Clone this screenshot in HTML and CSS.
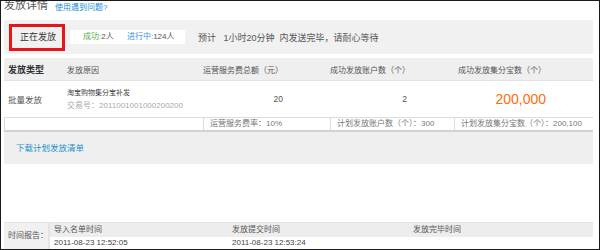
FILE: index.html
```html
<!DOCTYPE html>
<html>
  <head>
    <meta charset="utf-8" />
    <title>发放详情</title>
    <link rel="stylesheet" href="styles.css">
  </head>
  <body>
    <div class="frame">
      <div class="title-row">
        <h2 class="title">发放详情</h2>
        <a class="help" href="#">使用遇到问题?</a>
      </div>

      <div class="status">
        <div class="status-tag">正在发放</div>
        <div class="status-count">
          <span class="ok">成功:</span>2人
          <span class="run">进行中:</span>124人
        </div>
        <div class="status-eta">预计&nbsp;&nbsp; 1小时20分钟&nbsp; 内发送完毕，请耐心等待</div>
      </div>

      <div class="detail">
        <div class="grid head">
          <div class="cell type">发放类型</div>
          <div class="cell">发放原因</div>
          <div class="cell num">运营服务费总额（元）</div>
          <div class="cell num">成功发放账户数（个）</div>
          <div class="cell num">成功发放集分宝数（个）</div>
        </div>
        <div class="grid body">
          <div class="cell kind">批量发放</div>
          <div class="cell reason">
            <div class="reason-name">淘宝购物集分宝补发</div>
            <div class="trade">交易号：2011001001000200200</div>
          </div>
          <div class="cell num">20</div>
          <div class="cell num count">2</div>
          <div class="cell num big">200,000</div>
        </div>
        <div class="grid sum">
          <div class="cell span2"></div>
          <div class="cell">运营服务费率：10%</div>
          <div class="cell">计划发放账户数（个）：300</div>
          <div class="cell">计划发放集分宝数（个）：200,100</div>
        </div>
        <div class="download">
          <a href="#">下载计划发放清单</a>
        </div>
      </div>

      <div class="report">
        <div class="report-label">时间报告：</div>
        <div class="report-table">
          <div class="report-head">
            <div>导入名单时间</div>
            <div>发放提交时间</div>
            <div>发放完毕时间</div>
          </div>
          <div class="report-row">
            <div>2011-08-23 12:52:05</div>
            <div>2011-08-23 12:53:24</div>
            <div></div>
          </div>
        </div>
      </div>
    </div>
  </body>
</html>
```

FILE: styles.css
```css
html, body {
  margin: 0;
  padding: 0;
  background: #fff;
}
body {
  font-family: "Liberation Sans", "Noto Sans CJK SC", sans-serif;
  color: #444;
  font-size: 8px;
}
a {
  text-decoration: none;
}
.frame {
  width: 600px;
  height: 250px;
  box-sizing: border-box;
  border: 1px solid #1a1a1a;
  padding: 0 6px 0 3px;
  overflow: hidden;
}
.title-row {
  display: flex;
  align-items: flex-start;
  height: 19px;
}
.title {
  margin: -2px 0 0 0;
  font-size: 11px;
  line-height: 12px;
  font-weight: normal;
  color: #555;
}
.help {
  margin: 2px 0 0 7px;
  font-size: 8px;
  line-height: 10px;
  color: #1b8fd6;
}

/* status bar */
.status {
  display: flex;
  align-items: center;
  height: 34px;
  background: #f1f1f1;
}
.status-tag {
  margin-left: 5px;
  height: 21px;
  width: 42px;
  border: 3px solid #e8141a;
  font-size: 9px;
  line-height: 21px;
  padding-left: 8px;
  color: #333;
}
.status-count {
  margin-left: 5px;
  background: #fff;
  height: 14px;
  width: 102px;
  padding-left: 13px;
  line-height: 14px;
  font-size: 8px;
  color: #555;
}
.ok {
  color: #4faf3c;
}
.run {
  margin-left: 11px;
  color: #3b92e8;
}
.status-eta {
  margin-left: 13px;
  font-size: 9px;
  color: #555;
}

/* detail table */
.detail {
  margin-top: 4px;
  background: #efefef;
}
.grid {
  display: grid;
  grid-template-columns: 59px 140px 127px 124px 139px;
}
.cell {
  padding-left: 4px;
}
.cell.num {
  text-align: right;
  padding: 0 47px 0 0;
}
.head {
  height: 22px;
  align-items: center;
  border-bottom: 1px solid #e2e2e2;
  font-size: 8px;
  color: #555;
}
.head .type {
  font-weight: bold;
  font-size: 9px;
  color: #333;
}
.body {
  background: #fff;
  height: 36px;
  align-items: center;
  font-size: 8.5px;
  color: #555;
}
.kind {
  color: #555;
  font-size: 8.5px;
}
.reason {
  line-height: 13px;
  font-size: 8px;
}
.reason-name {
  font-size: 7px;
  color: #444;
}
.trade {
  color: #aaa;
}
.count {
  padding-bottom: 4px;
}
.big {
  font-size: 14px;
  color: #ff6d0b;
}
.sum {
  background: #fff;
  border-top: 1px solid #ddd;
  border-bottom: 2px solid #d2d2d2;
  height: 12px;
  line-height: 12px;
  font-size: 8px;
  color: #777;
}
.sum .cell {
  border-left: 1px solid #ddd;
  padding-left: 6px;
}
.sum .span2 {
  grid-column: span 2;
}
.download {
  height: 32px;
  line-height: 32px;
  padding-left: 12px;
}
.download a {
  font-size: 8.5px;
  color: #1d8fd2;
}

/* time report */
.report {
  display: flex;
  margin-top: 58px;
  height: 27px;
  border-top: 1px solid #e4e4e4;
}
.report-label {
  width: 46px;
  box-sizing: border-box;
  background: #f0f0f0;
  border-right: 2px solid #e4e4e4;
  font-size: 8px;
  line-height: 26px;
  padding-left: 4px;
  color: #555;
}
.report-table {
  flex: 1;
}
.report-head,
.report-row {
  display: grid;
  grid-template-columns: 178px 181px 1fr;
}
.report-head {
  height: 14px;
  line-height: 14px;
  background: #ededed;
  color: #555;
}
.report-row {
  height: 12px;
  line-height: 12px;
  color: #444;
}
.report-head div,
.report-row div {
  padding-left: 4px;
}
```
